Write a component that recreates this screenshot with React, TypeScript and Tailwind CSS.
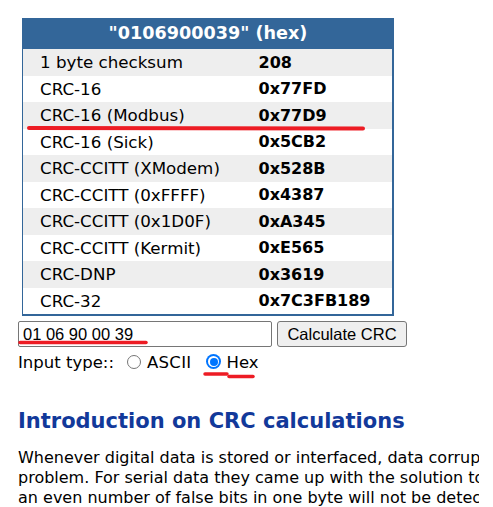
const ROWS = [
  { label: '1 byte checksum', value: '208' },
  { label: 'CRC-16', value: '0x77FD' },
  { label: 'CRC-16 (Modbus)', value: '0x77D9' },
  { label: 'CRC-16 (Sick)', value: '0x5CB2' },
  { label: 'CRC-CCITT (XModem)', value: '0x528B' },
  { label: 'CRC-CCITT (0xFFFF)', value: '0x4387' },
  { label: 'CRC-CCITT (0x1D0F)', value: '0xA345' },
  { label: 'CRC-CCITT (Kermit)', value: '0xE565' },
  { label: 'CRC-DNP', value: '0x3619' },
  { label: 'CRC-32', value: '0x7C3FB189' },
]

const INTRO = [
  'Whenever digital data is stored or interfaced, data corruption might occur. Since the beginning of computer science, people have been thinking of ways to deal with this type of',
  'problem. For serial data they came up with the solution to attach a parity bit to each sent byte. This simple detection mechanism works if an odd number of bits in a byte changes, but',
  'an even number of false bits in one byte will not be detected by the parity check. To overcome this problem developers have searched for mathematical sound mechanisms to detect',
]

export default function App() {
  return (
    <div className="relative w-[479px] h-[507px] overflow-hidden bg-white pl-[18px] pt-[18px] font-['DejaVu_Sans',Verdana,sans-serif] text-black">
      {/* results table */}
      <div className="ml-[4px] w-[372px] border-l border-r-2 border-b-2 border-[#336699]">
        <div className="h-[31px] -ml-px -mr-[2px] bg-[#336699] flex items-center justify-center text-white font-bold text-[17.6px]">
          "0106900039" (hex)
        </div>
        {ROWS.map((row, i) => (
          <div key={row.label} className={`flex items-center pt-px h-[26.5px] ${i % 2 === 0 ? 'bg-[#eeeeee]' : 'bg-white'}`}>
            <div className="w-[235.5px] pl-[17px] text-[16.7px] whitespace-nowrap">{row.label}</div>
            <div className="font-bold text-[16px]">{row.value}</div>
          </div>
        ))}
      </div>

      {/* form */}
      <div className="mt-[5px] flex items-center gap-[5px]">
        <input
          readOnly
          value="01 06 90 00 39"
          className="w-[254px] h-[26px] border border-[#767676] rounded-[2px] pl-[4px] font-['Liberation_Sans',Arial,sans-serif] text-[16.5px] text-black outline-none"
        />
        <button className="w-[130px] h-[26px] border border-[#767676] rounded-[3px] bg-[#efefef] font-['Liberation_Sans',Arial,sans-serif] text-[16.5px] text-black">
          Calculate CRC
        </button>
      </div>
      <div className="mt-[6px] h-[20px] flex items-center text-[16.5px]">
        <span>Input type::</span>
        <span className="ml-[13px] -mt-[3px] w-[14px] h-[14px] rounded-full border border-[#767676] bg-white" />
        <span className="ml-[6px] tracking-[0.3px]">ASCII</span>
        <span className="ml-[15px] -mt-[3px] w-[15px] h-[15px] rounded-full bg-[#0075ff] flex items-center justify-center">
          <span className="w-[11px] h-[11px] rounded-full bg-white flex items-center justify-center">
            <span className="w-[8px] h-[8px] rounded-full bg-[#0075ff]" />
          </span>
        </span>
        <span className="ml-[5px]">Hex</span>
      </div>

      {/* intro */}
      <h2 className="mt-[35px] text-[21px] leading-[26px] font-bold text-[#12399a] whitespace-nowrap">
        Introduction on CRC calculations
      </h2>
      <div className="mt-[14px] text-[16px] leading-[20px]">
        {INTRO.map(line => (
          <div key={line} className="whitespace-nowrap">{line}</div>
        ))}
      </div>

      {/* red annotation strokes */}
      <svg className="absolute left-0 top-0 pointer-events-none" width="493" height="507">
        <g stroke="#ed1c24" strokeLinecap="round" fill="none">
          <path d="M29 128 L363 128.5" strokeWidth="4" />
          <path d="M20 342.5 L146 342.5" strokeWidth="3.5" />
          <path d="M205 374 L227 374" strokeWidth="3.5" />
          <path d="M229 376.5 L253 376.5" strokeWidth="3.5" />
        </g>
      </svg>
    </div>
  )
}
